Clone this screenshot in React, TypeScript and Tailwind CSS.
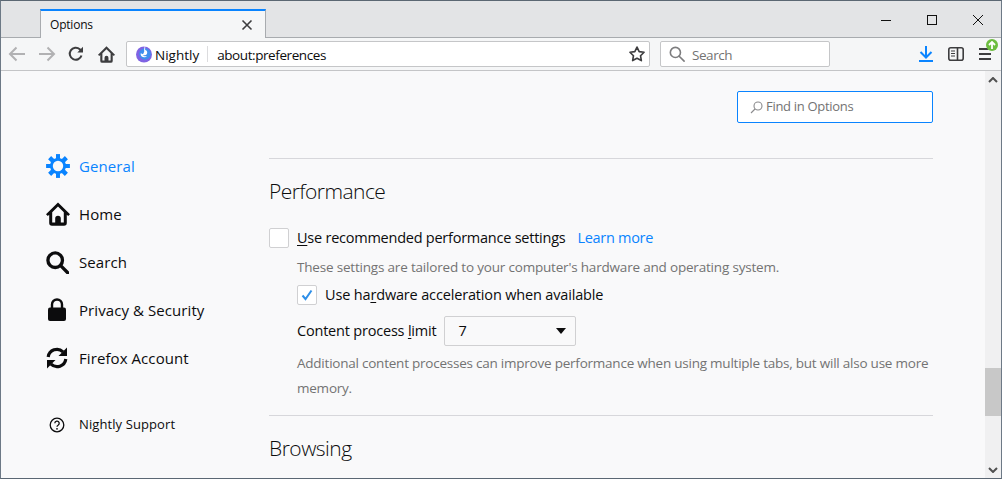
const F = "font-['Open_Sans',sans-serif]";

function Back({ color = "#b1b1b3" }: { color?: string }) {
  return (
    <svg width="18" height="16" viewBox="0 0 18 16" fill="none" stroke={color} strokeWidth="2">
      <path d="M17 8H2M8.500 1.500 2 8l6.500 6.500" />
    </svg>
  );
}
function Fwd() {
  return (
    <svg width="18" height="16" viewBox="0 0 18 16" fill="none" stroke="#b1b1b3" strokeWidth="2">
      <path d="M1 8h15M9.500 1.500 16 8l-6.500 6.500" />
    </svg>
  );
}
function HomeIcon({ size = 16, color = "#3d3d3f" }: { size?: number; color?: string }) {
  return (
    <svg width={size} height={size} viewBox="0 0 24 24" fill={color}>
      <path d="M12 .5 0 12.300l1.800 1.800 1.400-1.300V21a2.800 2.800 0 0 0 2.800 2.800h12a2.800 2.800 0 0 0 2.800-2.800v-8.200l1.400 1.300 1.800-1.800zM17.800 20.500h-3V16.500a2.800 2.800 0 0 0-5.600 0v4H6.200V10.300L12 4.500l5.800 5.800z" />
      <rect x="11" y="16" width="2" height="2" />
    </svg>
  );
}
function Reload({ size = 16, color = "#3d3d3f" }: { size?: number; color?: string }) {
  return (
    <svg width={size} height={size} viewBox="0 0 16 16" fill="none" stroke={color} strokeWidth="2">
      <path d="M13.500 9.500A6 6 0 1 1 11.800 3.300L13.500 5" />
      <path d="M15 .8V6.500H9.300z" fill={color} stroke="none" />
    </svg>
  );
}
function Mag({ size, color, sw }: { size: number; color: string; sw: number }) {
  return (
    <svg width={size} height={size} viewBox="0 0 18 18" fill="none" stroke={color} strokeWidth={sw}>
      <circle cx="7.200" cy="7.200" r="5.700" />
      <path d="M11.500 11.500 17 17" strokeLinecap="round" />
    </svg>
  );
}
function Gear() {
  const teeth = [0, 45, 90, 135, 180, 225, 270, 315];
  return (
    <svg width="24" height="24" viewBox="0 0 24 24">
      {teeth.map((a) => (
        <rect key={a} x="10" y="0.300" width="4" height="23.400" fill="#0a84ff" transform={`rotate(${a} 12 12)`} />
      ))}
      <circle cx="12" cy="12" r="8" fill="#0a84ff" />
      <circle cx="12" cy="12" r="5.200" fill="#f9f9fa" />
    </svg>
  );
}
function Lock() {
  return (
    <svg width="20" height="24" viewBox="0 0 20 24" fill="#0c0c0d">
      <path d="M5 10V6.500a5 5 0 0 1 10 0V10" fill="none" stroke="#0c0c0d" strokeWidth="2.400" />
      <rect x="1" y="9.500" width="18" height="13.500" rx="2" />
    </svg>
  );
}
function Sync() {
  return (
    <svg width="22" height="22" viewBox="0 0 22 22" fill="none" stroke="#0c0c0d" strokeWidth="3.200">
      <path d="M2.200 10A8.800 8.800 0 0 1 17 4.800" />
      <path d="M21 .5v8.500h-8.500z" fill="#0c0c0d" stroke="none" />
      <path d="M19.800 12A8.800 8.800 0 0 1 5 17.200" />
      <path d="M1 21.500V13h8.500z" fill="#0c0c0d" stroke="none" />
    </svg>
  );
}
function Nightly() {
  return (
    <svg width="18" height="18" viewBox="0 0 18 18">
      <circle cx="9" cy="9.500" r="8" fill="#7f63e3" />
      <circle cx="10" cy="9" r="5.800" fill="#3f8fee" />
      <path d="M10 .5c.5 1.500 0 3 .2 4.500 1.800.5 2.500 2.200 1.800 3.700-.6 1.300-2.500 2-4.300 1.400 1 1.300 3 1.500 4.500.8-1.500 1.800-4.200 1.800-5.700.3-.8-.8-1-2-.7-3l2.200 1c.5-1 .8-1.800 1.200-2.500C9 4 9.500 2 10 .5z" fill="#fff" />
    </svg>
  );
}
function Win({ d }: { d: "min" | "max" | "close" }) {
  return (
    <svg width="12" height="12" viewBox="0 0 12 12" fill="none" stroke="#111" strokeWidth="1" shapeRendering="crispEdges">
      {d === "min" && <path d="M1 6h10" />}
      {d === "max" && <rect x="1.500" y="1.500" width="9" height="9" />}
      {d === "close" && <path d="M1 1l10 10M11 1 1 11" shapeRendering="auto" />}
    </svg>
  );
}

function NavItem({ icon, label, active }: { icon: React.ReactNode; label: string; active?: boolean }) {
  return (
    <div className="flex h-[48px] items-center">
      <div className="flex w-[33px] justify-start">{icon}</div>
      <span className={`text-[15px] tracking-[0.08px] ${active ? "text-[#0a84ff]" : "text-[#0c0c0d]"}`}>{label}</span>
    </div>
  );
}

export default function App() {
  return (
    <div className={`flex h-[479px] w-[1002px] flex-col overflow-hidden border border-t-[#5b6773] border-x-[#6d7986] border-b-[#5b6773] ${F}`}>
      {/* title bar */}
      <div className="flex h-[37px] shrink-0 items-end bg-[#e3e4e6] border-b border-[#a8abaf]">
        <div className="ml-[39px] -mb-px flex h-[29px] w-[226px] items-center justify-between border-x border-[#a8abaf] border-t-2 border-t-[#0a84ff] bg-[#f5f6f7] pl-[9px] pr-[12px]">
          <span className="text-[12px] tracking-[-0.2px] text-[#0c0c0d]">Options</span>
          <svg width="12" height="12" viewBox="0 0 12 12" stroke="#3d3d3f" strokeWidth="1.600" fill="none">
            <path d="M1.500 1.500l9 9M10.500 1.500l-9 9" />
          </svg>
        </div>
        <div className="flex-1" />
        <div className="flex h-full items-center self-start pt-px">
          <div className="flex w-[46px] justify-center"><Win d="min" /></div>
          <div className="flex w-[46px] justify-center"><Win d="max" /></div>
          <div className="flex w-[46px] justify-center"><Win d="close" /></div>
        </div>
      </div>

      {/* toolbar */}
      <div className="relative flex h-[33px] shrink-0 items-center border-b border-[#c4c5c7] bg-[#f5f6f7]">
        <div className="ml-[7px] flex w-[118px] items-center">
          <div className="w-[30px]"><Back /></div>
          <div className="w-[30px]"><Fwd /></div>
          <div className="w-[30px]"><Reload /></div>
          <div className="w-[20px]"><HomeIcon size={17} /></div>
        </div>
        <div className="flex h-[26px] w-[524px] items-center rounded-[2px] border border-[#c5c6c8] bg-white pl-[8px] pr-[3px]">
          <Nightly />
          <span className="ml-[2px] pt-[2px] text-[13.500px] text-[#0c0c0d]">Nightly</span>
          <div className="ml-[8px] h-[16px] w-px bg-[#dcdcde]" />
          <span className="ml-[9px] flex-1 pt-[2px] text-[13.500px] tracking-[-0.42px] text-[#0c0c0d]">about:preferences</span>
          <svg width="18" height="18" viewBox="0 0 24 24" fill="none" stroke="#3d3d3f" strokeWidth="2.200" strokeLinejoin="round">
            <path d="M12 2.800l2.900 6 6.500.9-4.700 4.600 1.100 6.500L12 17.700l-5.800 3.100 1.100-6.500-4.700-4.600 6.500-.9z" />
          </svg>
        </div>
        <div className="ml-[10px] flex h-[26px] w-[170px] items-center rounded-[2px] border border-[#c5c6c8] bg-white pl-[8px]">
          <Mag size={16} color="#7d7d7f" sw={1.800} />
          <span className="ml-[7px] pt-[2px] text-[13.500px] tracking-[-0.45px] text-[#737373]">Search</span>
        </div>
        <div className="ml-[89px] flex items-center">
          <svg width="14" height="16" viewBox="0 0 14 16" fill="none" stroke="#0a84ff" strokeWidth="2">
            <path d="M7 0v11M1.500 6 7 11.500 12.500 6M0 15h14" />
          </svg>
          <svg className="ml-[15px]" width="16" height="14" viewBox="0 0 16 14" fill="none" stroke="#3d3d3f" strokeWidth="1.600">
            <rect x=".8" y=".8" width="14.400" height="12.400" rx="2" />
            <path d="M9.500 1v12" />
            <path d="M3 4h4M3 6.500h4M3 9h4" strokeWidth="1" />
          </svg>
          <svg className="ml-[15px]" width="12" height="12" viewBox="0 0 12 12" stroke="#3d3d3f" strokeWidth="2">
            <path d="M0 1h12M0 6h12M0 11h12" />
          </svg>
        </div>
        <div className="absolute left-[985px] top-px flex h-[12px] w-[12px] items-center justify-center rounded-full bg-[#6cbd3f]">
          <svg width="8" height="8" viewBox="0 0 8 8" stroke="#fff" strokeWidth="1.800" fill="none">
            <path d="M4 8V1M1 4l3-3 3 3" />
          </svg>
        </div>
      </div>

      {/* content */}
      <div className="flex min-h-0 flex-1 bg-[#f9f9fa]">
        <aside className="w-[268px] shrink-0 pl-[45px] pt-[71px]">
          <NavItem icon={<Gear />} label="General" active />
          <NavItem icon={<HomeIcon size={24} color="#0c0c0d" />} label="Home" />
          <NavItem icon={<Mag size={23} color="#0c0c0d" sw={2.600} />} label="Search" />
          <NavItem icon={<div className="pl-[1px]"><Lock /></div>} label="Privacy & Security" />
          <NavItem icon={<Sync />} label="Firefox Account" />
          <div className="mt-[31px] flex h-[24px] items-center text-[#0c0c0d]">
            <div className="w-[33px] pl-[3px]">
              <svg width="16" height="16" viewBox="0 0 16 16" fill="none" stroke="#0c0c0d" strokeWidth="1.300">
                <circle cx="8" cy="8" r="6.800" />
                <path d="M5.800 6.300a2.200 2.200 0 1 1 3.300 1.900c-.8.500-1.100.8-1.100 1.600" />
                <circle cx="8" cy="11.800" r=".9" fill="#0c0c0d" stroke="none" />
              </svg>
            </div>
            <span className="text-[13px] tracking-[0.1px]">Nightly Support</span>
          </div>
        </aside>

        <main className="w-[664px] shrink-0 overflow-hidden">
          <div className="flex justify-end pt-[20px]">
            <div className="flex h-[32px] w-[196px] items-center rounded-[2px] border border-[#0a84ff] bg-white pl-[12px]">
              <svg width="13" height="13" viewBox="0 0 13 13" fill="none" stroke="#8a8a8c" strokeWidth="1.100">
                <circle cx="8" cy="5" r="4" />
                <path d="M5 8 1 12" />
              </svg>
              <span className="ml-[3px] text-[13px] tracking-[-0.3px] text-[#737373]">Find in Options</span>
            </div>
          </div>
          <div className="mt-[35px] h-px bg-[#d7d7db]" />
          <h2 className="mt-[17px] text-[21px] font-light leading-[30px] tracking-[-0.55px] text-[#0c0c0d]">Performance</h2>
          <div className="mt-[21px] flex h-[22px] items-center">
            <div className="h-[20px] w-[20px] rounded-[2px] border border-[#d0d0d2] bg-white" />
            <span className="ml-[8px] text-[14.500px] tracking-[-0.24px] text-[#0c0c0d]"><u className="underline-offset-2">U</u>se recommended performance settings</span>
            <span className="ml-[12px] text-[14.500px] tracking-[-0.3px] text-[#0a84ff]">Learn more</span>
          </div>
          <p className="ml-[28px] mt-[9px] text-[13.500px] leading-[18px] tracking-[-0.19px] text-[#737373]">These settings are tailored to your computer's hardware and operating system.</p>
          <div className="ml-[28px] mt-[8px] flex h-[22px] items-center">
            <div className="flex h-[20px] w-[20px] items-center justify-center rounded-[2px] border border-[#d0d0d2] bg-white">
              <svg width="12" height="12" viewBox="0 0 12 12" fill="none" stroke="#2f8fe8" strokeWidth="2">
                <path d="M1.500 6.500 4.500 10 10.500 1.500" />
              </svg>
            </div>
            <span className="ml-[8px] text-[14.500px] tracking-[-0.16px] text-[#0c0c0d]">Use ha<u className="underline-offset-2">r</u>dware acceleration when available</span>
          </div>
          <div className="ml-[28px] mt-[10px] flex h-[30px] items-center">
            <span className="text-[14.500px] tracking-[-0.2px] text-[#0c0c0d]">Content process <u className="underline-offset-2">l</u>imit</span>
            <div className="ml-[8px] flex h-[30px] w-[132px] items-center justify-between rounded-[2px] border border-[#d0d0d2] bg-[#f9f9fa] pl-[13px] pr-[9px]">
              <span className="text-[14.500px] text-[#0c0c0d]">7</span>
              <svg width="10" height="6" viewBox="0 0 10 6" fill="#0c0c0d"><path d="M0 0h10L5 6z" /></svg>
            </div>
          </div>
          <p className="ml-[28px] mt-[5px] text-[13.500px] leading-[25px] tracking-[-0.23px] text-[#737373]">Additional content processes can improve performance when using multiple tabs, but will also use more memory.</p>
          <div className="mt-[14px] h-px bg-[#d7d7db]" />
          <h2 className="mt-[17px] text-[21px] font-light leading-[30px] tracking-[-0.5px] text-[#0c0c0d]">Browsing</h2>
        </main>

        <div className="flex-1" />

        <div className="flex w-[16px] shrink-0 flex-col items-center bg-[#f0f0f1]">
          <div className="flex h-[17px] items-center justify-center">
            <svg width="10" height="6" viewBox="0 0 10 6" fill="none" stroke="#505050" strokeWidth="2"><path d="M1 5l4-4 4 4" /></svg>
          </div>
          <div className="mt-[280px] h-[48px] w-full bg-[#c8c8c8]" />
          <div className="flex-1" />
          <div className="flex h-[17px] items-center justify-center">
            <svg width="10" height="6" viewBox="0 0 10 6" fill="none" stroke="#505050" strokeWidth="2"><path d="M1 1l4 4 4-4" /></svg>
          </div>
        </div>
      </div>
    </div>
  );
}
